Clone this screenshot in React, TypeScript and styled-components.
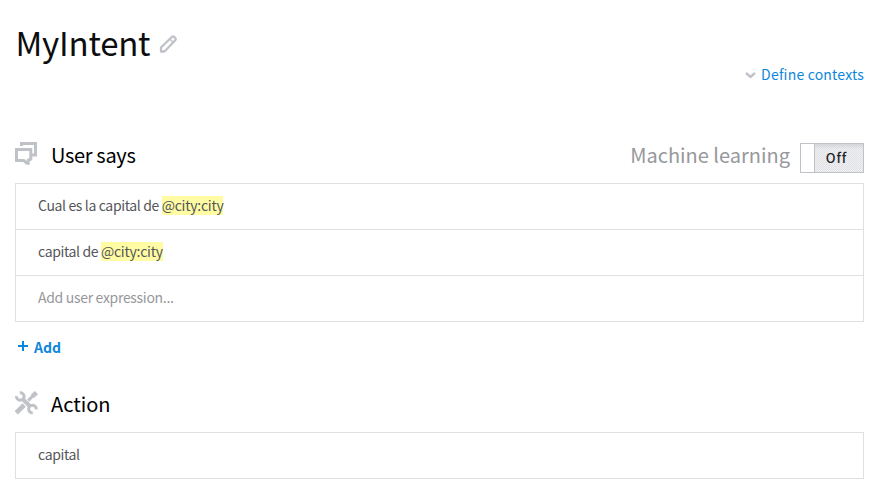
import React from "react";
import styled, { createGlobalStyle } from "styled-components";

const Global = createGlobalStyle`
  * { box-sizing: border-box; }
  body { margin: 0; background: #fff; font-family: "Noto Sans CJK SC", "Noto Sans", sans-serif; }
`;

const Page = styled.main`
  width: 886px;
  height: 492px;
  padding: 18px 22px 0 15px;
  overflow: hidden;
  color: #55565a;
`;

const TitleRow = styled.header`
  display: flex;
  align-items: center;
  height: 48px;
  svg { margin: 4px 0 0 9px; }
`;

const Title = styled.h1`
  margin: 0 0 0 0.5px;
  font-size: 33px;
  line-height: 48px;
  letter-spacing: -0.22px;
  font-weight: 400;
  color: #0c0d0e;
  white-space: nowrap;
`;

const ContextLink = styled.a`
  display: flex;
  justify-content: flex-end;
  align-items: center;
  gap: 5px;
  height: 15px;
  margin-top: 1px;
  font-size: 14px;
  line-height: 15px;
  letter-spacing: 0.19px;
  color: #0d87db;
  white-space: nowrap;
  svg { margin-top: 1px; }
`;

const SectionHead = styled.div<{ $top: number }>`
  display: flex;
  align-items: center;
  height: 30px;
  margin-top: ${(p) => p.$top}px;
  margin-bottom: 10px;
`;

const IconSlot = styled.span`
  display: flex;
  width: 36px;
  height: 32px;
  align-items: flex-start;
`;

const SectionTitle = styled.h2<{ $tight?: boolean }>`
  margin: 0;
  padding-bottom: 6px;
  font-size: 20px;
  line-height: 28px;
  letter-spacing: ${(p) => (p.$tight ? "-0.33px" : "0")};
  font-weight: 400;
  color: #000;
  white-space: nowrap;
`;

const MachineLabel = styled.span`
  margin: 0 10px 0 auto;
  padding-bottom: 6px;
  font-size: 20px;
  line-height: 28px;
  color: #97989b;
  white-space: nowrap;
`;

const Toggle = styled.div`
  display: flex;
  width: 64px;
  height: 30px;
  border: 1px solid #bfc2c7;
`;

const Knob = styled.span`
  width: 14px;
  border-right: 1px solid #bfc2c7;
  background: #fff;
`;

const ToggleState = styled.span`
  flex: 1;
  padding-right: 5px;
  text-align: center;
  font-size: 13px;
  line-height: 27px;
  letter-spacing: 0.9px;
  font-weight: 500;
  color: #222326;
  background:
    linear-gradient(#c6c8cc99, #dcdde000 5px),
    repeating-conic-gradient(#e0e1e4 0 25%, #f0f0f2 0 50%) 0 0 / 2px 2px;
`;

const List = styled.div`
  border: 1px solid #dfe0e1;
`;

const Row = styled.div<{ $muted?: boolean }>`
  height: 46px;
  padding-left: 22px;
  font-size: 14px;
  line-height: 42px;
  letter-spacing: ${(p) => (p.$muted ? "-0.31px" : "-0.36px")};
  white-space: pre;
  color: ${(p) => (p.$muted ? "#97989b" : "#55565a")};
  & + & { border-top: 1px solid #dfe0e1; }
  &:first-child { height: 45px; }
`;

const Entity = styled.mark`
  display: inline-block;
  height: 19px;
  line-height: 19px;
  letter-spacing: -0.25px;
  color: inherit;
  background: #fffca3;
`;

const AddButton = styled.a`
  display: flex;
  align-items: center;
  gap: 6px;
  height: 20px;
  margin: 15px 0 0 3px;
  font-size: 14px;
  line-height: 20px;
  font-weight: 700;
  color: #0d87db;
  svg { margin-bottom: 2px; }
`;

const Pencil = () => (
  <svg width="19" height="20" viewBox="0 0 19 20" fill="none" stroke="#bfc2c7" strokeWidth="2.3" strokeLinejoin="round">
    <path d="M2 17.5V13.5L13 2.8Q14.2 2 15.2 3L16.3 4.1Q17.3 5.2 16.3 6.3L5.5 17.5Z" />
    <path d="M11 5.2L14 8.2" strokeWidth="1.5" />
  </svg>
);

const Chats = () => (
  <svg width="24" height="24" viewBox="0 0 24 24" fill="none" stroke="#bfc2c7" strokeWidth="3">
    <path d="M1.5 7.5H15.8V17L13.2 18.3V21.3H12L8.8 18.5H1.5Z" />
    <path d="M6.5 4V1.5H20.5V13H17" />
  </svg>
);

const Tools = () => (
  <svg width="23" height="24" viewBox="0 0 23 24" fill="none" stroke="#bfc2c7">
    <path d="M4.8 1.7A3.8 3.8 0 1 1 1.5 5.2" strokeWidth="3" />
    <path d="M17.7 21.8A3.8 3.8 0 1 1 21.2 18.4" strokeWidth="3" />
    <path d="M7.8 8.2L15.2 15.5" strokeWidth="4" />
    <path d="M1.2 21.8L9.2 14" strokeWidth="4.6" />
    <path d="M13.2 9.6L17.8 5" strokeWidth="3" />
    <path d="M17.4 5.4L21.4 1.6" strokeWidth="4.6" />
  </svg>
);

export default function App() {
  return (
    <Page>
      <Global />
      <TitleRow>
        <Title>MyIntent</Title>
        <Pencil />
      </TitleRow>
      <ContextLink>
        <svg width="11" height="7" viewBox="0 0 11 7" fill="none" stroke="#bfc2c7" strokeWidth="2.4">
          <path d="M1 1L5.5 5L10 1" />
        </svg>
        Define contexts
      </ContextLink>
      <SectionHead $top={61}>
        <IconSlot><Chats /></IconSlot>
        <SectionTitle $tight>User says</SectionTitle>
        <MachineLabel>Machine learning</MachineLabel>
        <Toggle>
          <Knob />
          <ToggleState>Off</ToggleState>
        </Toggle>
      </SectionHead>
      <List>
        <Row>Cual es la capital de <Entity>@city:city</Entity></Row>
        <Row>capital de <Entity>@city:city</Entity></Row>
        <Row $muted>Add user expression...</Row>
      </List>
      <AddButton>
        <svg width="10" height="10" viewBox="0 0 10 10" fill="none" stroke="#0d87db" strokeWidth="2">
          <path d="M5 0V10M0 5H10" />
        </svg>
        Add
      </AddButton>
      <SectionHead $top={35}>
        <IconSlot><Tools /></IconSlot>
        <SectionTitle>Action</SectionTitle>
      </SectionHead>
      <List>
        <Row>capital</Row>
      </List>
    </Page>
  );
}
